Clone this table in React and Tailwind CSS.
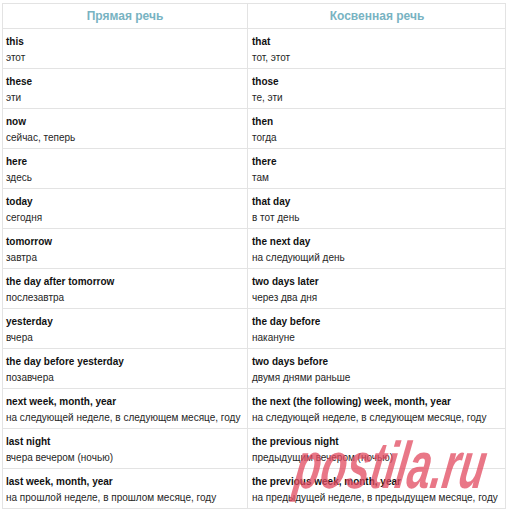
import React from "react";

const rows = [
  ["this", "этот", "that", "тот, этот"],
  ["these", "эти", "those", "те, эти"],
  ["now", "сейчас, теперь", "then", "тогда"],
  ["here", "здесь", "there", "там"],
  ["today", "сегодня", "that day", "в тот день"],
  ["tomorrow", "завтра", "the next day", "на следующий день"],
  ["the day after tomorrow", "послезавтра", "two days later", "через два дня"],
  ["yesterday", "вчера", "the day before", "накануне"],
  ["the day before yesterday", "позавчера", "two days before", "двумя днями раньше"],
  ["next week, month, year", "на следующей неделе, в следующем месяце, году", "the next (the following) week, month, year", "на следующей неделе, в следующем месяце, году"],
  ["last night", "вчера вечером (ночью)", "the previous night", "предыдущим вечером (ночью)"],
  ["last week, month, year", "на прошлой неделе, в прошлом месяце, году", "the previous week, month, year", "на предыдущей неделе, в предыдущем месяце, году"],
];

function Cell({ en, ru, last }) {
  return (
    <div className={`h-[40px] flex flex-col justify-center pt-[1px] border-b border-[#e3e3e3] ${last ? "pl-[4px]" : "pl-[3px] border-r"}`}>
      <div className="text-[10px] font-bold leading-[16px] text-[#111111]">{en}</div>
      <div className="text-[10px] leading-[15px] text-[#262626]">{ru}</div>
    </div>
  );
}

export default function App() {
  return (
    <div className="relative w-[510px] h-[519px] bg-white overflow-hidden" style={{ fontFamily: '"Liberation Sans", Arial, sans-serif' }}>
      <div className="ml-[2px] mt-[3px] w-[504px] border-t border-l border-r border-[#e3e3e3] grid grid-cols-[245px_258px]">
        <div className="h-[25px] flex items-center justify-center border-r border-b border-[#e3e3e3] text-[12px] font-bold text-[#78b3c2]">Прямая речь</div>
        <div className="h-[25px] flex items-center justify-center border-b border-[#e3e3e3] text-[12px] font-bold text-[#78b3c2]">Косвенная речь</div>
        {rows.map((r, i) => (
          <React.Fragment key={i}>
            <Cell en={r[0]} ru={r[1]} />
            <Cell en={r[2]} ru={r[3]} last />
          </React.Fragment>
        ))}
      </div>
      <div className="absolute left-[296px] top-[432px] text-[66px] italic font-bold leading-none text-[#e24a60] opacity-75 whitespace-nowrap origin-left scale-x-[0.64] skew-x-[-14deg]">
        postila.ru
      </div>
    </div>
  );
}
